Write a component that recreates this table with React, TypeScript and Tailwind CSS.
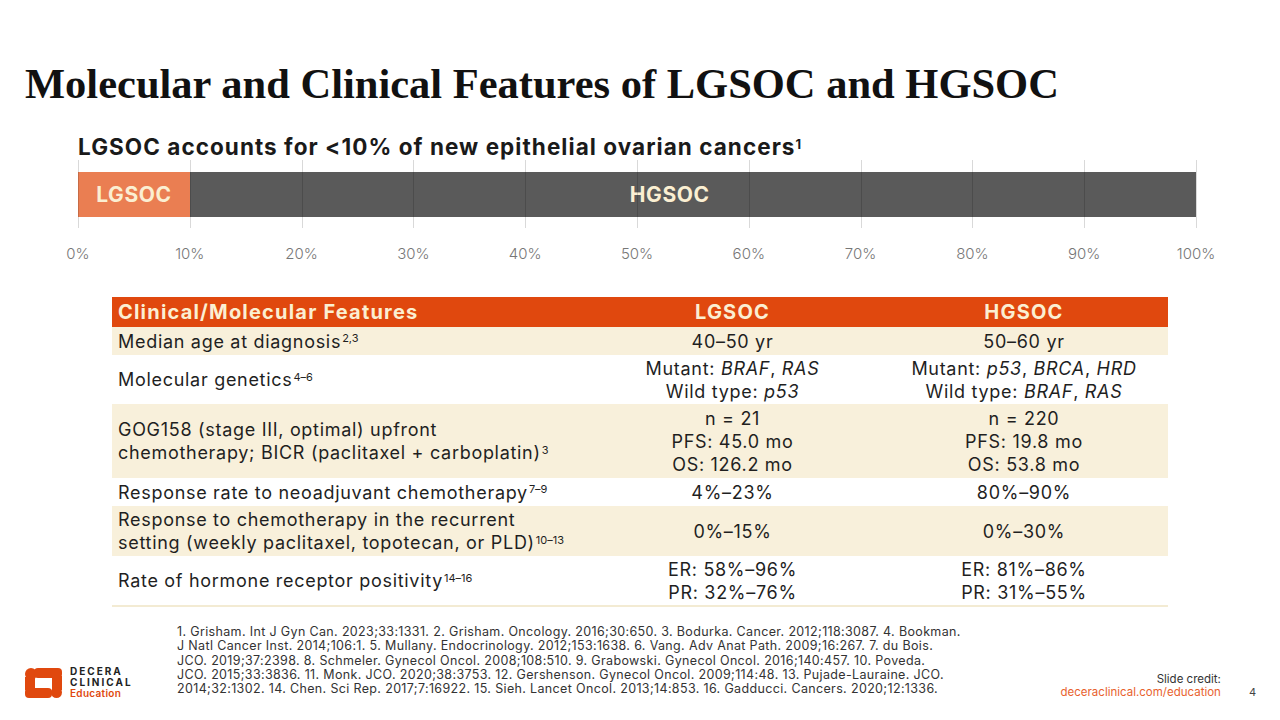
import React from 'react';

// Slide: LGSOC vs HGSOC comparison

const ticks = [0, 10, 20, 30, 40, 50, 60, 70, 80, 90, 100];

const sans = { fontFamily: 'Inter, "Open Sans", Arial, sans-serif' };

function Sup({ children }: { children: React.ReactNode }) {
  return <sup className="text-[11px] tracking-normal ml-[1px]">{children}</sup>;
}

function Logo() {
  return (
    <div className="flex items-center gap-[8px]">
      <svg width="37" height="30" viewBox="0 0 37 30">
        <g fill="#E0480E">
          <circle cx="6" cy="6" r="6" />
          <rect x="9" y="0" width="28" height="10" rx="4" />
          <rect x="0" y="9" width="10" height="13" />
          <rect x="27" y="8" width="10" height="14" />
          <rect x="0" y="20" width="27" height="10" rx="4" />
          <circle cx="31.5" cy="24.5" r="5.5" />
        </g>
        <rect x="11" y="10" width="15" height="10" fill="#fff" />
      </svg>
      <div className="flex flex-col leading-[11px] text-[10px] font-bold" style={sans}>
        <span className="tracking-[2px] text-[#222]">DECERA</span>
        <span className="tracking-[2px] text-[#222]">CLINICAL</span>
        <span className="text-[#E0480E] font-semibold tracking-[0.3px]">Education</span>
      </div>
    </div>
  );
}

function Chart() {
  return (
    <div className="ml-[78px] w-[1118px]">
      <div className="relative h-[68px]">
        <div className="absolute left-0 right-0 top-[12px] h-[45px] flex">
          <div className="w-[10%] bg-[#EA7E52] flex items-center justify-center text-[21px] tracking-[0.6px] font-bold text-[#FBEFD2]">
            LGSOC
          </div>
          <div className="flex-1 bg-[#5A5A5A] flex items-center pl-[440px] text-[21px] tracking-[0.6px] font-bold text-[#FBEFD2]">
            HGSOC
          </div>
        </div>
        {ticks.map((t) => (
          <div
            key={t}
            className="absolute top-0 bottom-0 w-px bg-black/15"
            style={{ left: `${t}%` }}
          />
        ))}
      </div>
      <div className="relative h-[40px]">
        {ticks.map((t) => (
          <span
            key={t}
            className="absolute top-[15px] -translate-x-1/2 text-[15px] font-light text-[#777]"
            style={{ left: `${t}%` }}
          >
            {t}%
          </span>
        ))}
      </div>
    </div>
  );
}

type Row = { label: React.ReactNode; lg: React.ReactNode; hg: React.ReactNode; h: string; cream: boolean };

const rows: Row[] = [
  {
    label: <>Median age at diagnosis<Sup>2,3</Sup></>,
    lg: '40–50 yr',
    hg: '50–60 yr',
    h: 'h-[28px]',
    cream: true,
  },
  {
    label: <>Molecular genetics<Sup>4–6</Sup></>,
    lg: <>Mutant: <i>BRAF</i>, <i>RAS</i><br />Wild type: <i>p53</i></>,
    hg: <>Mutant: <i>p53</i>, <i>BRCA</i>, <i>HRD</i><br />Wild type: <i>BRAF</i>, <i>RAS</i></>,
    h: 'h-[49px]',
    cream: false,
  },
  {
    label: <>GOG158 (stage III, optimal) upfront<br />chemotherapy; BICR (paclitaxel + carboplatin)<Sup>3</Sup></>,
    lg: <>n = 21<br />PFS: 45.0 mo<br />OS: 126.2 mo</>,
    hg: <>n = 220<br />PFS: 19.8 mo<br />OS: 53.8 mo</>,
    h: 'h-[74px]',
    cream: true,
  },
  {
    label: <>Response rate to neoadjuvant chemotherapy<Sup>7–9</Sup></>,
    lg: '4%–23%',
    hg: '80%–90%',
    h: 'h-[28px]',
    cream: false,
  },
  {
    label: <>Response to chemotherapy in the recurrent<br />setting (weekly paclitaxel, topotecan, or PLD)<Sup>10–13</Sup></>,
    lg: '0%–15%',
    hg: '0%–30%',
    h: 'h-[50px]',
    cream: true,
  },
  {
    label: <>Rate of hormone receptor positivity<Sup>14–16</Sup></>,
    lg: <>ER: 58%–96%<br />PR: 32%–76%</>,
    hg: <>ER: 81%–86%<br />PR: 31%–55%</>,
    h: 'h-[49px]',
    cream: false,
  },
];

function Table() {
  return (
    <div className="ml-[112px] w-[1056px] mt-[29px] text-[18px] tracking-[0.7px] leading-[23px] text-[#1f1f1f]">
      <div className="grid grid-cols-[473px_295px_288px] h-[30px] bg-[#E0480E] text-[#FBEFD2] font-bold text-[20px] tracking-[1.2px] items-center">
        <div className="pl-[6px]">Clinical/Molecular Features</div>
        <div className="text-center">LGSOC</div>
        <div className="text-center">HGSOC</div>
      </div>
      {rows.map((r, i) => (
        <div
          key={i}
          className={`grid grid-cols-[473px_295px_288px] items-center ${r.h} ${r.cream ? 'bg-[#F8F0DB]' : 'bg-white'}`}
        >
          <div className="pl-[6px]">{r.label}</div>
          <div className="text-center">{r.lg}</div>
          <div className="text-center">{r.hg}</div>
        </div>
      ))}
      <div className="h-[2px] bg-[#F3EBD3]" />
    </div>
  );
}

export default function App() {
  return (
    <div className="w-[1280px] h-[720px] bg-white relative overflow-hidden" style={sans}>
      <h1
        className="pt-[58px] pl-[25px] text-[42.5px] leading-[52px] font-bold text-[#111]"
        style={{ fontFamily: '"Liberation Serif", "Times New Roman", serif' }}
      >
        Molecular and Clinical Features of LGSOC and HGSOC
      </h1>
      <div className="pl-[78px] mt-[24px] text-[22.5px] tracking-[1.05px] leading-[26px] font-bold text-[#1a1a1a]">
        LGSOC accounts for &lt;10% of new epithelial ovarian cancers<sup className="text-[13px]">1</sup>
      </div>
      <Chart />
      <Table />
      <div className="flex items-end mt-[18px]">
        <div className="w-[177px] pl-[25px] mb-[-3px]">
          <Logo />
        </div>
        <div className="w-[830px] text-[12.5px] tracking-[0.35px] leading-[14.3px] text-[#333]">
          1. Grisham. Int J Gyn Can. 2023;33:1331. 2. Grisham. Oncology. 2016;30:650. 3. Bodurka. Cancer. 2012;118:3087. 4. Bookman.<br />
          J Natl Cancer Inst. 2014;106:1. 5. Mullany. Endocrinology. 2012;153:1638. 6. Vang. Adv Anat Path. 2009;16:267. 7. du Bois.<br />
          JCO. 2019;37:2398. 8. Schmeler. Gynecol Oncol. 2008;108:510. 9. Grabowski. Gynecol Oncol. 2016;140:457. 10. Poveda.<br />
          JCO. 2015;33:3836. 11. Monk. JCO. 2020;38:3753. 12. Gershenson. Gynecol Oncol. 2009;114:48. 13. Pujade-Lauraine. JCO.<br />
          2014;32:1302. 14. Chen. Sci Rep. 2017;7:16922. 15. Sieh. Lancet Oncol. 2013;14:853. 16. Gadducci. Cancers. 2020;12:1336.
        </div>
        <div className="flex-1 flex items-end justify-end pr-[24px] mb-[-3px]">
          <div className="text-right text-[11.5px] leading-[13px]">
            <div className="text-[#333]">Slide credit:</div>
            <div className="text-[#E8622E]">deceraclinical.com/education</div>
          </div>
          <div className="ml-[28px] text-[11px] leading-[13px] text-[#444]">4</div>
        </div>
      </div>
    </div>
  );
}
